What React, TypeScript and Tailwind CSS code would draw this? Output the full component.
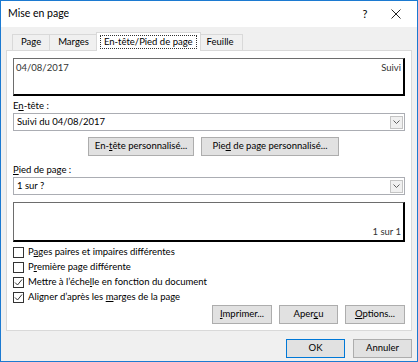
import React from 'react'

const font = { fontFamily: 'Lato, "Noto Sans", sans-serif' }

const Btn = ({ children, w, primary }: { children: React.ReactNode; w: string; primary?: boolean }) => (
    <div
        className={`${w} h-[19px] flex items-center justify-center bg-[#e1e1e1] border ${primary ? 'border-[#0078d7]' : 'border-[#adadad]'} text-[9.5px] text-black`}
    >
        <span className="whitespace-nowrap">{children}</span>
    </div>
)

const Select = ({ value }: { value: string }) => (
    <div className="h-[18px] flex items-center border border-[#abadb3] bg-white pl-[3px] pr-[1px]">
        <span className="flex-1 text-[9.5px]">{value}</span>
        <div className="w-[13px] h-[13px] border border-[#c4c4c4] bg-[#f0f0f0] flex items-center justify-center">
            <svg width="7" height="4" viewBox="0 0 7 4">
                <path d="M0.5 0.5 L3.5 3.5 L6.5 0.5" stroke="#606060" fill="none" />
            </svg>
        </div>
    </div>
)

const Check = ({ checked, children }: { checked?: boolean; children: React.ReactNode }) => (
    <div className="h-[15px] flex items-center gap-[4px]">
        <div className="w-[11px] h-[11px] border border-[#333] bg-white flex items-center justify-center">
            {checked && (
                <svg width="9" height="9" viewBox="0 0 9 9">
                    <path d="M1 4.5 L3.5 7 L8 1.5" stroke="#333" strokeWidth="1" fill="none" />
                </svg>
            )}
        </div>
        <span className="text-[9.5px]">{children}</span>
    </div>
)

const Tab = ({ label, active }: { label: React.ReactNode; active?: boolean }) =>
    active ? (
        <div className="relative z-10 -mb-px h-[19px] px-[3px] bg-white border border-b-0 border-[#d9d9d9] flex items-center -mx-[2px]">
            <span className="border border-dotted border-[#333] px-[3px] leading-[12px]">{label}</span>
        </div>
    ) : (
        <div className="h-[16px] px-[8px] bg-[#f0f0f0] border border-b-0 border-[#d9d9d9] flex items-center -ml-px first:ml-0">
            {label}
        </div>
    )

export default function App() {
    return (
        <div style={font} className="w-[418px] h-[362px] border border-[#1c7ad1] bg-[#f0f0f0] flex flex-col text-black">
            <div className="h-[26px] bg-white flex items-center pl-[7px] shrink-0">
                <span className="flex-1 text-[10.5px]">Mise en page</span>
                <span className="text-[11px] w-[22px] text-center mr-[15px]">?</span>
                <svg width="10" height="10" viewBox="0 0 10 10" className="mr-[16px]">
                    <path d="M0.5 0.5 L9.5 9.5 M9.5 0.5 L0.5 9.5" stroke="#222" strokeWidth="1" />
                </svg>
            </div>
            <div className="px-[5px] flex flex-col flex-1">
                <div className="flex items-end pl-[6px] mt-[4px] text-[9.5px] h-[19px]">
                    <Tab label="Page" />
                    <Tab label="Marges" />
                    <Tab label="En-tête/Pied de page" active />
                    <Tab label="Feuille" />
                </div>
                <div className="h-[281px] bg-white border border-[#d9d9d9] px-[6px] pt-[7px] flex flex-col">
                    <div className="h-[38px] border-t border-l border-[#6d6d6d] border-r-2 border-b-2 border-r-black border-b-black flex justify-between px-[2px] pt-[2px] text-[9.5px] text-[#333]">
                        <span>04/08/2017</span>
                        <span>Suivi</span>
                    </div>
                    <div className="text-[9.5px] mt-[3px] leading-[14px]">
                        E<u>n</u>-tête :
                    </div>
                    <Select value="Suivi du 04/08/2017" />
                    <div className="flex gap-[7px] ml-[75px] mt-[6px]">
                        <Btn w="w-[106px]">
                            En-<u>t</u>ête personnalisé...
                        </Btn>
                        <Btn w="w-[138px]">
                            Pie<u>d</u> de page personnalisé...
                        </Btn>
                    </div>
                    <div className="text-[9.5px] mt-[7px] leading-[14px]">
                        <u>P</u>ied de page :
                    </div>
                    <Select value="1 sur ?" />
                    <div className="h-[40px] mt-[7px] border-t border-l border-[#6d6d6d] border-r-2 border-b-2 border-r-black border-b-black flex justify-end items-end px-[2px] pb-[1px] text-[9.5px] text-[#333]">
                        <span>1 sur 1</span>
                    </div>
                    <div className="mt-[3px] flex flex-col">
                        <Check>
                            P<u>a</u>ges paires et impaires différentes
                        </Check>
                        <Check>
                            P<u>r</u>emière page différente
                        </Check>
                        <Check checked>
                            Mettre à l’éche<u>l</u>le en fonction du document
                        </Check>
                        <Check checked>
                            Aligner d’après les <u>m</u>arges de la page
                        </Check>
                    </div>
                    <div className="flex justify-end gap-[7px] mt-[0px]">
                        <Btn w="w-[60px]">
                            <u>I</u>mprimer...
                        </Btn>
                        <Btn w="w-[59px]">
                            Aper<u>ç</u>u
                        </Btn>
                        <Btn w="w-[60px]">
                            <u>O</u>ptions...
                        </Btn>
                    </div>
                </div>
                <div className="flex justify-end gap-[8px] mt-[8px]">
                    <Btn w="w-[59px]" primary>
                        OK
                    </Btn>
                    <Btn w="w-[59px]">Annuler</Btn>
                </div>
            </div>
        </div>
    )
}
